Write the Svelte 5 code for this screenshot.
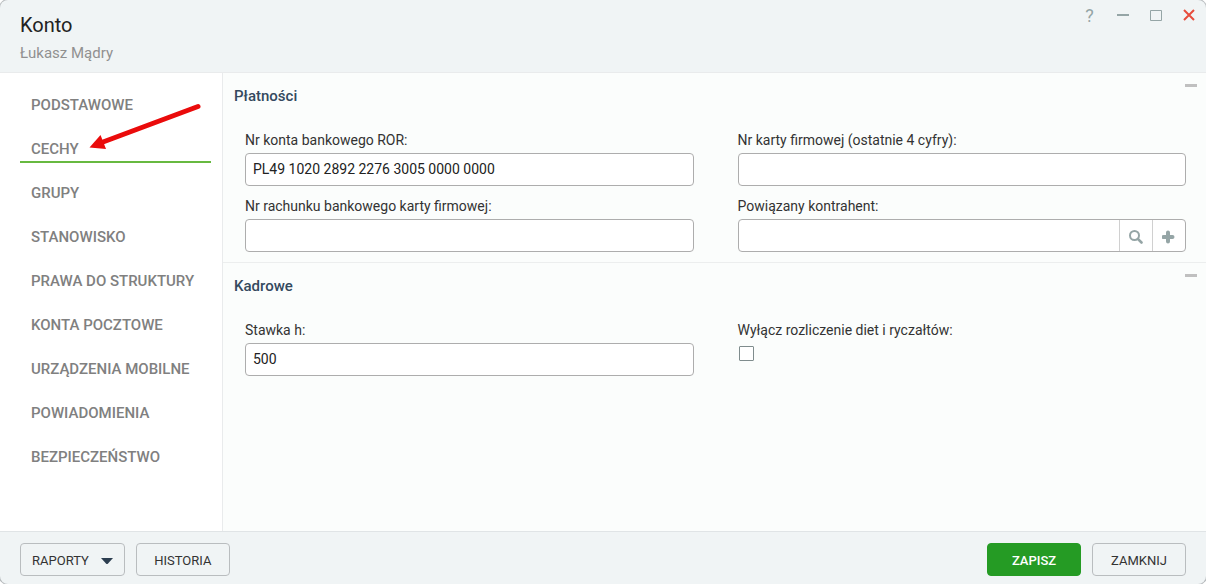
<script lang="ts">
	const tabs = [
		{ id: 'podstawowe', label: 'PODSTAWOWE' },
		{ id: 'cechy', label: 'CECHY' },
		{ id: 'grupy', label: 'GRUPY' },
		{ id: 'stanowisko', label: 'STANOWISKO' },
		{ id: 'prawa', label: 'PRAWA DO STRUKTURY' },
		{ id: 'poczta', label: 'KONTA POCZTOWE' },
		{ id: 'urzadzenia', label: 'URZĄDZENIA MOBILNE' },
		{ id: 'powiadomienia', label: 'POWIADOMIENIA' },
		{ id: 'bezpieczenstwo', label: 'BEZPIECZEŃSTWO' }
	];

	let activeTab = $state('cechy');
	let paymentsOpen = $state(true);
	let hrOpen = $state(true);

	let bankAccount = $state('PL49 1020 2892 2276 3005 0000 0000');
	let cardNumber = $state('');
	let cardAccount = $state('');
	let contractor = $state('');
	let hourlyRate = $state('500');
	let skipAllowances = $state(false);
</script>

<div class="window">
	<header class="window-header">
		<div>
			<h1 class="title">Konto</h1>
			<p class="subtitle">Łukasz Mądry</p>
		</div>
		<div class="window-controls">
			<button class="control" aria-label="Pomoc">?</button>
			<button class="control" aria-label="Minimalizuj">
				<svg width="12" height="12" viewBox="0 0 12 12"><path d="M0 6h12" stroke="currentColor" stroke-width="2" /></svg>
			</button>
			<button class="control" aria-label="Maksymalizuj">
				<svg width="12" height="12" viewBox="0 0 12 12"><path d="M.5 1.500h11v10h-11z" fill="none" stroke="currentColor" /></svg>
			</button>
			<button class="control close" aria-label="Zamknij okno">
				<svg width="12" height="12" viewBox="0 0 12 12"><path d="M1 1l10 10M11 1L1 11" stroke="currentColor" stroke-width="2" /></svg>
			</button>
		</div>
	</header>

	<div class="window-body">
		<nav class="sidebar">
			{#each tabs as tab (tab.id)}
				<a
					class="tab"
					class:active={activeTab === tab.id}
					href="#{tab.id}"
					onclick={() => (activeTab = tab.id)}
				>
					{tab.label}
					{#if tab.id === 'cechy'}
						<svg class="pointer" width="112" height="50" viewBox="0 0 112 50" aria-hidden="true">
							<path d="M108 4.500L13 40" stroke="#ea0b0b" stroke-width="5" stroke-linecap="round" />
							<path d="M-.5 45.500L10.500 33L16 47z" fill="#ea0b0b" />
						</svg>
					{/if}
				</a>
			{/each}
		</nav>

		<main class="content">
			<section class="section">
				<div class="section-header">
					<h2 class="section-title">Płatności</h2>
					<button
						class="collapse-button"
						onclick={() => (paymentsOpen = !paymentsOpen)}
						aria-label={paymentsOpen ? 'Zwiń Płatności' : 'Rozwiń Płatności'}
					></button>
				</div>
				{#if paymentsOpen}
					<div class="fields">
						<div class="field">
							<label for="bank-account">Nr konta bankowego ROR:</label>
							<input id="bank-account" class="text-input" type="text" bind:value={bankAccount} />
						</div>
						<div class="field">
							<label for="card-number">Nr karty firmowej (ostatnie 4 cyfry):</label>
							<input id="card-number" class="text-input" type="text" bind:value={cardNumber} />
						</div>
						<div class="field">
							<label for="card-account">Nr rachunku bankowego karty firmowej:</label>
							<input id="card-account" class="text-input" type="text" bind:value={cardAccount} />
						</div>
						<div class="field">
							<label for="contractor">Powiązany kontrahent:</label>
							<div class="input-group">
								<input id="contractor" type="text" bind:value={contractor} />
								<button class="addon" aria-label="Szukaj">
									<svg width="14" height="14" viewBox="0 0 14 14" fill="none" stroke="currentColor">
										<circle cx="5.500" cy="5.500" r="4.500" stroke-width="2" />
										<path d="M8.800 8.800L12.500 12.500" stroke-width="2.600" stroke-linecap="round" />
									</svg>
								</button>
								<button class="addon" aria-label="Dodaj">
									<svg width="14" height="14" viewBox="0 0 14 14">
										<path d="M6 2.500v9M1.500 7h9" stroke="currentColor" stroke-width="4" stroke-linecap="round" />
									</svg>
								</button>
							</div>
						</div>
					</div>
				{/if}
			</section>

			<section class="section">
				<div class="section-header">
					<h2 class="section-title">Kadrowe</h2>
					<button
						class="collapse-button"
						onclick={() => (hrOpen = !hrOpen)}
						aria-label={hrOpen ? 'Zwiń Kadrowe' : 'Rozwiń Kadrowe'}
					></button>
				</div>
				{#if hrOpen}
					<div class="fields">
						<div class="field">
							<label for="hourly-rate">Stawka h:</label>
							<input id="hourly-rate" class="text-input" type="text" bind:value={hourlyRate} />
						</div>
						<div class="field">
							<label for="skip-allowances">Wyłącz rozliczenie diet i ryczałtów:</label>
							<input id="skip-allowances" class="checkbox" type="checkbox" bind:checked={skipAllowances} />
						</div>
					</div>
				{/if}
			</section>
		</main>
	</div>

	<footer class="window-footer">
		<button class="button dropdown">
			RAPORTY
			<svg width="12" height="6" viewBox="0 0 12 6"><path d="M0 0h12L6.800 5.700q-.8.600-1.600 0z" fill="#2c3e50" /></svg>
		</button>
		<button class="button">HISTORIA</button>
		<span class="spacer"></span>
		<button class="button primary">ZAPISZ</button>
		<button class="button">ZAMKNIJ</button>
	</footer>
</div>

<style>
	:global(body) {
		background: #fff;
	}

	.window,
	.window button,
	.window input {
		font-family: Roboto, 'Noto Sans', sans-serif;
		font-size: 14px;
	}

	.window {
		display: flex;
		flex-direction: column;
		min-height: 100vh;
		color: #333;
		background: #f0f4f5;
		border-radius: 8px;
		overflow: hidden;
		box-shadow: 0 0 0 1px #b8bcbe;
	}

	button {
		margin: 0;
		padding: 0;
		border: none;
		background: none;
		cursor: pointer;
	}

	/* Header */
	.window-header {
		display: flex;
		justify-content: space-between;
		align-items: flex-start;
		padding: 12px 1px 8px 20px;
		border-bottom: 1px solid #e9ebec;
	}

	.title {
		margin: 0;
		font-size: 20px;
		line-height: 26px;
		font-weight: 400;
		color: #222;
	}

	.subtitle {
		margin: 4px 0 0;
		font-size: 15px;
		line-height: 22px;
		color: #909090;
	}

	.window-controls {
		display: flex;
		margin-top: -12px;
	}

	.window .control {
		display: flex;
		align-items: center;
		justify-content: center;
		width: 33px;
		height: 30px;
		font-size: 18px;
		color: #95a5a6;
	}

	.window .close {
		color: #e74c3c;
	}

	/* Body */
	.window-body {
		display: flex;
		flex: 1;
	}

	.sidebar {
		box-sizing: border-box;
		width: 223px;
		flex-shrink: 0;
		padding: 2px 11px 0 20px;
		background: #fff;
		border-right: 1px solid #e9ebec;
	}

	.tab {
		position: relative;
		display: block;
		padding: 20px 11px 2px;
		border-bottom: 2px solid transparent;
		font-size: 15px;
		line-height: 20px;
		font-weight: 500;
		color: #808080;
		text-decoration: none;
		white-space: nowrap;
	}

	.tab.active {
		border-bottom-color: #67b940;
	}

	.pointer {
		position: absolute;
		left: 70px;
		top: -17px;
		overflow: visible;
	}

	.content {
		flex: 1;
		min-width: 0;
		background: #fbfdfc;
	}

	.section {
		padding: 0 20px 10px 11px;
		border-bottom: 1px solid #eceeee;
	}

	.section:last-child {
		border-bottom: none;
	}

	.section-header {
		display: flex;
		justify-content: space-between;
		align-items: flex-start;
		margin-right: -11px;
		padding-top: 11px;
	}

	.section-title {
		margin: 2px 0 0;
		font-size: 15px;
		line-height: 20px;
		font-weight: 500;
		color: #34495e;
	}

	.collapse-button {
		width: 12px;
		height: 3px;
		background: #c0c0c0;
	}

	.fields {
		display: grid;
		grid-template-columns: 1fr 1fr;
		gap: 10px 44px;
		margin-top: 24px;
		padding-left: 11px;
	}

	.field {
		display: flex;
		flex-direction: column;
		gap: 3px;
		min-width: 0;
	}

	.field label {
		line-height: 20px;
	}

	.text-input,
	.input-group {
		box-sizing: border-box;
		width: 100%;
		height: 33px;
		background: #fff;
		border: 1px solid #adadad;
		border-radius: 4px;
	}

	.text-input {
		padding: 0 7px 2px;
		color: #222;
	}

	.input-group {
		display: flex;
		overflow: hidden;
	}

	.input-group input {
		flex: 1;
		min-width: 0;
		padding: 0 7px 2px;
		border: none;
		background: none;
		color: #222;
	}

	.addon {
		display: flex;
		align-items: center;
		justify-content: center;
		width: 33px;
		padding-top: 3px;
		border-left: 1px solid #d0d0d0;
		color: #95a5a6;
	}

	.checkbox {
		appearance: none;
		width: 15px;
		height: 15px;
		margin: 3px 1px;
		background: #fff;
		border: 1px solid #7f8c8d;
		border-radius: 1px;
	}

	.checkbox:checked {
		background: #67b940;
	}

	/* Footer */
	.window-footer {
		display: flex;
		gap: 11px;
		padding: 11px 20px 8px;
		border-top: 1px solid #e0e4e6;
	}

	.window .button {
		min-width: 94px;
		height: 33px;
		padding: 2px 17px 0;
		border: 1px solid #b9bdbf;
		border-radius: 4px;
		font-size: 13px;
		color: #333;
	}

	.window .dropdown {
		display: flex;
		align-items: center;
		gap: 12px;
		padding: 2px 11px 0;
	}

	.window .primary {
		border-color: #259b24;
		background: #259b24;
		font-weight: 500;
		color: #fff;
	}

	.spacer {
		flex: 1;
	}
</style>
